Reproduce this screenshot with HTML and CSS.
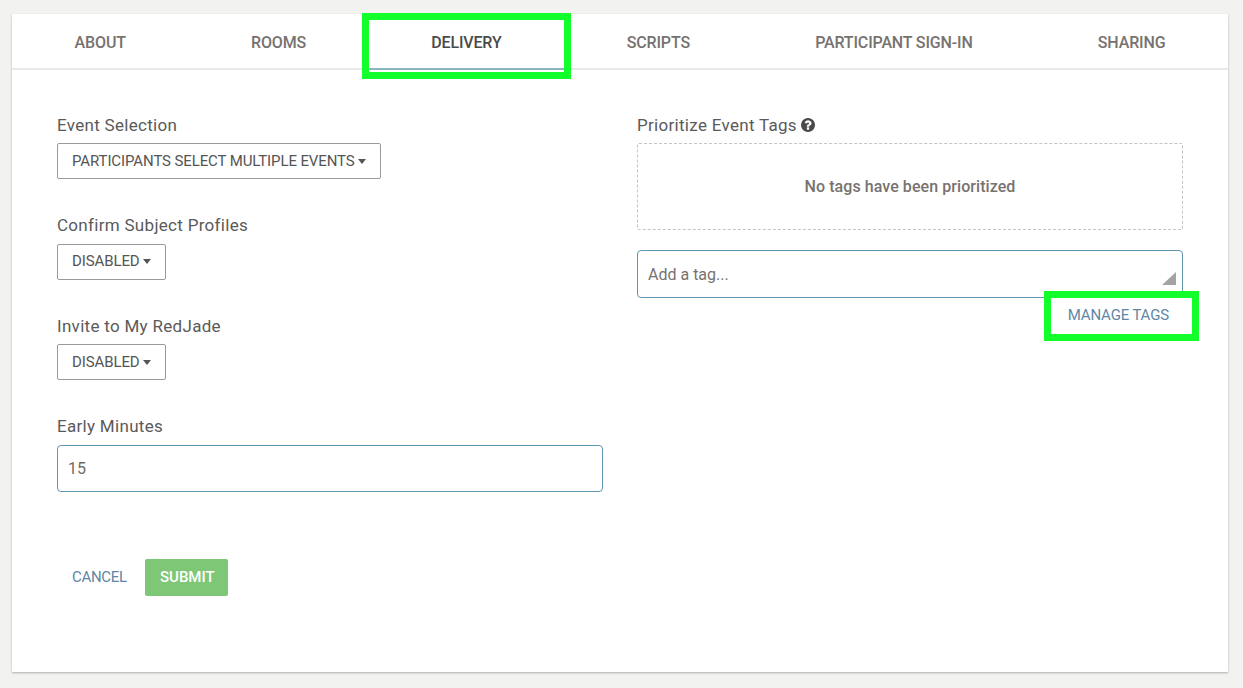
FILE: index.html
```html
<!DOCTYPE html>
<html lang="en">
<head>
<meta charset="utf-8">
<title>Delivery</title>
<link rel="stylesheet" href="styles.css">
</head>
<body>
<main class="card">
  <nav class="tabs">
    <a class="tab">ABOUT</a>
    <a class="tab">ROOMS</a>
    <a class="tab active">DELIVERY<span class="mark mark-tab"></span></a>
    <a class="tab">SCRIPTS</a>
    <a class="tab">PARTICIPANT SIGN-IN</a>
    <a class="tab">SHARING</a>
  </nav>
  <div class="content">
    <div class="columns">
      <section class="col">
        <div class="group g1">
          <label class="label">Event Selection</label>
          <button class="select">PARTICIPANTS SELECT MULTIPLE EVENTS<i class="caret"></i></button>
        </div>
        <div class="group g2">
          <label class="label">Confirm Subject Profiles</label>
          <button class="select">DISABLED<i class="caret"></i></button>
        </div>
        <div class="group g3">
          <label class="label">Invite to My RedJade</label>
          <button class="select">DISABLED<i class="caret"></i></button>
        </div>
        <div class="group g4">
          <label class="label">Early Minutes</label>
          <input class="field" type="text" value="15">
        </div>
      </section>
      <section class="col">
        <div class="group g1">
          <label class="label">Prioritize Event Tags
            <svg class="help" viewBox="128 128 1536 1536" aria-hidden="true"><path d="M1024 1376v-192q0-14-9-23t-23-9h-192q-14 0-23 9t-9 23v192q0 14 9 23t23 9h192q14 0 23-9t9-23zm256-672q0-88-55.5-163t-138.5-116-170-41q-243 0-371 213-15 24 8 42l132 100q7 6 19 6 16 0 25-12 53-68 86-92 34-24 86-24 48 0 85.5 26t37.5 59q0 38-20 61t-68 45q-63 28-115.5 86.5t-52.5 125.5v36q0 14 9 23t23 9h192q14 0 23-9t9-23q0-19 21.5-49.5t54.5-49.5q32-18 49-28.5t46-35 44.5-48 28-60.5 12.5-81zm384 192q0 209-103 385.5t-279.5 279.5-385.5 103-385.5-103-279.5-279.5-103-385.5 103-385.5 279.5-279.5 385.5-103 385.5 103 279.5 279.5 103 385.5z"/></svg>
          </label>
          <div class="dropzone">No tags have been prioritized</div>
        </div>
        <div class="tagbox">
          <textarea class="field tagarea" placeholder="Add a tag..."></textarea>
          <span class="grip"></span>
        </div>
        <div class="manage-row">
          <a class="manage">MANAGE TAGS<span class="mark mark-manage"></span></a>
        </div>
      </section>
    </div>
    <div class="actions">
      <a class="cancel">CANCEL</a>
      <button class="submit">SUBMIT</button>
    </div>
  </div>
</main>
</body>
</html>
```
FILE: styles.css
```css
* { box-sizing: border-box; }
html, body { height: 100%; }
body {
  margin: 0;
  padding: 14px 15px 0 12px;
  background: #f2f2f0;
  font-family: Roboto, "Liberation Sans", sans-serif;
  color: #555;
  overflow: hidden;
}
.card {
  height: 658px;
  background: #fff;
  box-shadow: 0 1px 2px rgba(0, 0, 0, .28);
}
.tabs {
  display: flex;
  height: 56px;
  border-bottom: 2px solid #e9e9e9;
}
.tab {
  position: relative;
  flex: 1 1 auto;
  height: 56px;
  padding-top: 19px;
  text-align: center;
  font-size: 16px;
  line-height: 19px;
  font-weight: 500;
  letter-spacing: -.15px;
  color: #77726f;
}
.tab.active {
  color: #4a4a4a;
  border-bottom: 2px solid #89b5c2;
}
.mark {
  position: absolute;
  border: 7px solid #12ff2c;
  pointer-events: none;
}
.mark-tab { left: -7px; right: -7px; top: -1px; height: 66px; }
.content { padding: 0 45px; }
.columns { display: flex; gap: 34px; height: 489px; }
.col { flex: 1 1 0; min-width: 0; }
.group { display: block; }
.g1 { padding-top: 45px; }
.g2 { padding-top: 36px; }
.g3 { padding-top: 36px; }
.g4 { padding-top: 36px; }
.label {
  display: block;
  font-size: 17px;
  line-height: 20px;
  height: 29px;
  color: #5a5a5a;
  letter-spacing: .3px;
}
.help { width: 14px; height: 14px; vertical-align: -1px; fill: #4a4a4a; }
.select {
  display: block;
  height: 36px;
  margin-top: -1px;
  padding: 0 14px;
  background: #fff;
  border: 1px solid #9a9a9a;
  border-radius: 2px;
  font: 400 15px/34px Roboto, sans-serif;
  letter-spacing: -.11px;
  color: #555;
}
.g2 .select { margin-top: 0; padding-bottom: 2px; line-height: 32px; }
.caret {
  display: inline-block;
  margin-left: 3px;
  vertical-align: 2px;
  border-top: 5px solid #555;
  border-left: 4.5px solid transparent;
  border-right: 4.5px solid transparent;
}
.field {
  display: block;
  width: 100%;
  border: 1px solid #5f95ae;
  border-radius: 4px;
  padding: 0 10px;
  background: #fff;
  font: 400 16px Roboto, sans-serif;
  color: #6f6a66;
  outline: none;
}
input.field { height: 47px; }
.dropzone {
  height: 87px;
  margin-top: -1px;
  border: 1px dashed #c4c4c4;
  border-radius: 2px;
  text-align: center;
  line-height: 85px;
  font-size: 16px;
  font-weight: 500;
  letter-spacing: .07px;
  color: #77726f;
}
.tagbox { position: relative; margin-top: 20px; height: 48px; }
.tagarea {
  height: 48px;
  padding-top: 14px;
  line-height: 20px;
  resize: none;
  overflow: hidden;
}
.tagarea::placeholder { color: #77726f; opacity: 1; }
.grip {
  position: absolute;
  right: 7px;
  bottom: 13px;
  width: 14px;
  height: 13px;
  background: #a3a3a3;
  clip-path: polygon(100% 0, 100% 100%, 0 100%);
}
.manage-row { display: flex; justify-content: flex-end; padding-right: 14px; margin-top: 8px; }
.manage {
  position: relative;
  font-size: 15px;
  line-height: 18px;
  letter-spacing: -.15px;
  color: #5f87a3;
}
.mark-manage { left: -24px; right: -30px; top: -15px; height: 50px; }
.actions { display: flex; align-items: center; }
.cancel {
  padding: 0 18px 2px 15px;
  font-size: 15px;
  letter-spacing: -.3px;
  color: #5f87a3;
}
.submit {
  width: 83px;
  height: 37px;
  padding: 0 0 2px 2px;
  border: 0;
  border-radius: 2px;
  background: #7dc777;
  color: #fff;
  font: 500 15px Roboto, sans-serif;
}
```
